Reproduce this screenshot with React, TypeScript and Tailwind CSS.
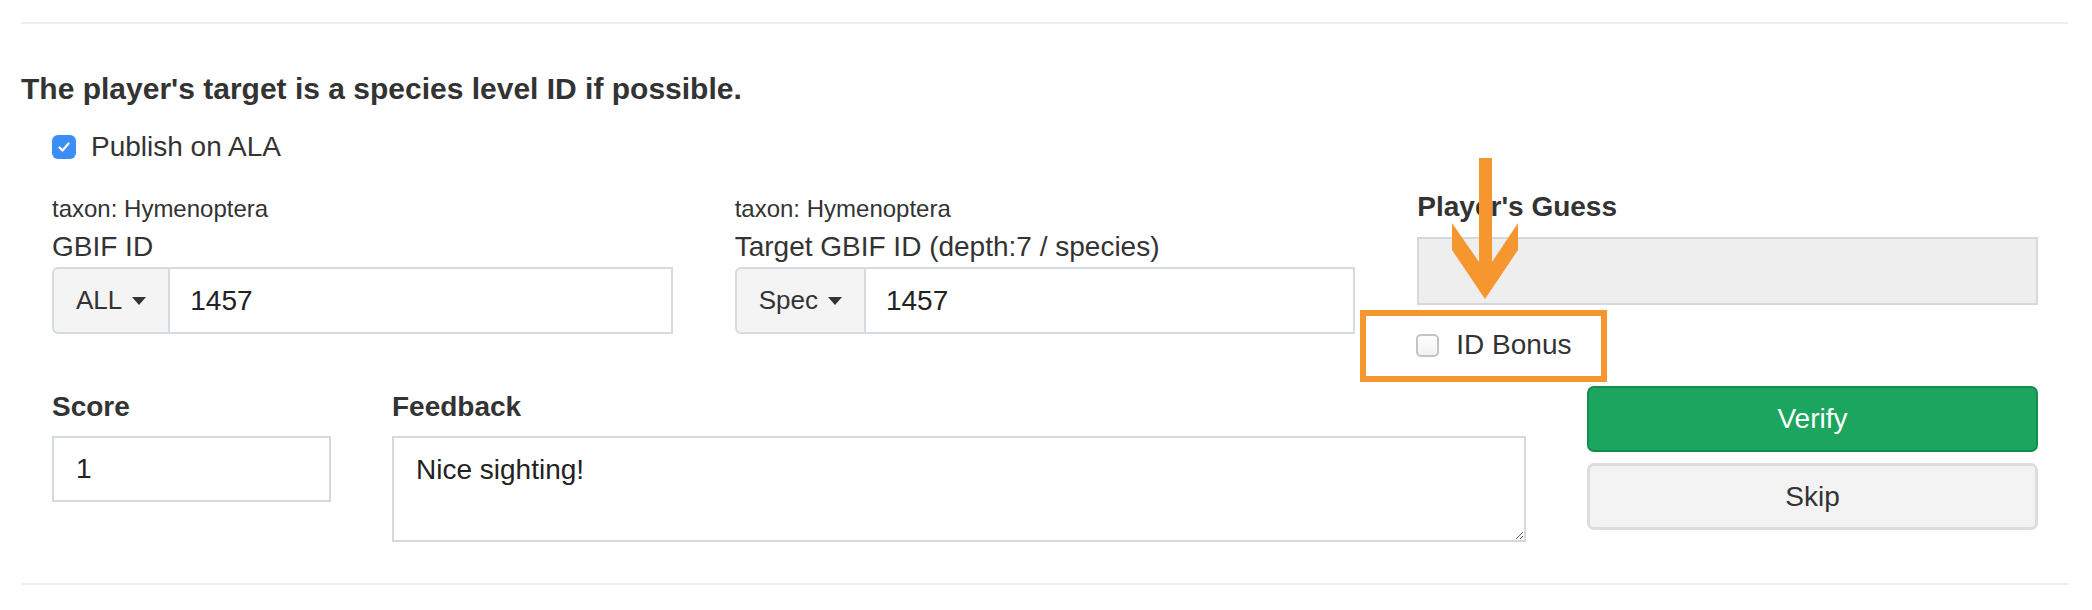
import React from "react";

function Caret() {
  return (
    <span className="inline-block h-0 w-0 border-x-[7px] border-t-[8px] border-x-transparent border-t-[#333]" />
  );
}

function IdField({
  taxon,
  label,
  addon,
  value,
}: {
  taxon: string;
  label: string;
  addon: string;
  value: string;
}) {
  return (
    <div>
      <div className="h-[32px] text-[24px] leading-[32px] text-[#333]">{taxon}</div>
      <div className="mt-[5px] text-[28px] leading-[34px] text-[#333]">{label}</div>
      <div className="mt-[3px] flex h-[67px]">
        <div className="flex items-center gap-[10px] rounded-l-[6px] border-2 border-[#d6dbe3] bg-[#f4f4f4] px-[22px] text-[26px] text-[#333]">
          <span>{addon}</span>
          <Caret />
        </div>
        <div className="flex flex-1 items-center border-2 border-l-0 border-[#d6dbe3] bg-white px-[20px] text-[28px] text-[#222]">
          {value}
        </div>
      </div>
    </div>
  );
}

export default function App() {
  return (
    <div className="relative h-[610px] w-[2092px] overflow-hidden bg-white font-['Liberation_Sans',Arial,sans-serif] text-[#333]">
      <div className="pl-[21px] pr-[24px] pt-[22px]">
        <div className="h-[2px] bg-[#eeeeee]" />

        <p className="mt-[47px] text-[30px] font-bold leading-[36px]">
          The player's target is a species level ID if possible.
        </p>

        <div className="pl-[31px] pr-[30px]">
          {/* publish checkbox */}
          <label className="mt-[20px] flex h-[40px] items-center gap-[15px] text-[28px]">
            <span className="flex size-[24px] items-center justify-center rounded-[6px] bg-[#3b8ef6]">
              <svg viewBox="0 0 16 16" className="size-[16px]" fill="none">
                <path d="M3.5 8.5l3 3 6-7" stroke="white" strokeWidth="2.2" strokeLinecap="round" strokeLinejoin="round" />
              </svg>
            </span>
            <span>Publish on ALA</span>
          </label>

          {/* first row: ids + guess */}
          <div className="mt-[26px] grid grid-cols-3 gap-x-[62px]">
            <IdField taxon="taxon: Hymenoptera" label="GBIF ID" addon="ALL" value="1457" />
            <IdField
              taxon="taxon: Hymenoptera"
              label="Target GBIF ID (depth:7 / species)"
              addon="Spec"
              value="1457"
            />
            <div>
              <div className="-mt-[3px] text-[28px] font-bold leading-[34px]">Player's Guess</div>
              <div className="mt-[13px] h-[68px] border-2 border-[#d3d8e1] bg-[#eeeeee]" />
              <label className="mt-[20px] flex h-[40px] items-center gap-[17px] text-[28px]">
                <span className="-ml-[1px] size-[23px] rounded-[5px] border-2 border-[#c4c4c4] bg-gradient-to-b from-white to-[#f1f1f1]" />
                <span>ID Bonus</span>
              </label>
            </div>
          </div>

          {/* second row: score, feedback, buttons */}
          <div className="mt-[21px] flex gap-x-[61px]">
            <div className="w-[279px]">
              <div className="mt-[4px] text-[28px] font-bold leading-[34px]">Score</div>
              <div className="mt-[12px] flex h-[66px] items-center border-2 border-[#d3d8e1] px-[22px] text-[28px] text-[#222]">
                1
              </div>
            </div>
            <div className="w-[1134px]">
              <div className="mt-[4px] text-[28px] font-bold leading-[34px]">Feedback</div>
              <textarea
                defaultValue="Nice sighting!"
                className="mt-[12px] block h-[106px] w-full border-2 border-[#d3d8e1] px-[22px] py-[12px] text-[28px] leading-[40px] text-[#222] outline-none"
              />
            </div>
            <div className="w-[451px]">
              <button className="flex h-[66px] w-full items-center justify-center rounded-[7px] border-2 border-[#138d4b] bg-[#1ba55f] text-[28px] text-white">
                Verify
              </button>
              <button className="mt-[11px] flex h-[67px] w-full items-center justify-center rounded-[7px] border-[3px] border-[#dddddd] bg-[#f3f3f3] text-[28px] text-[#333]">
                Skip
              </button>
            </div>
          </div>
        </div>

        <div className="mt-[41px] h-[2px] bg-[#eeeeee]" />
      </div>

      {/* annotation overlay */}
      <div className="absolute left-[1360px] top-[310px] h-[72px] w-[247px] border-[6px] border-[#f5962f]" />
      <svg className="absolute left-[1430px] top-[150px]" width="100" height="160" viewBox="0 0 100 160">
        <polygon
          points="49,8 62,8 62,112 88,73 88,100 55,149 22,100 22,73 49,112"
          fill="#f5962f"
        />
      </svg>
    </div>
  );
}
